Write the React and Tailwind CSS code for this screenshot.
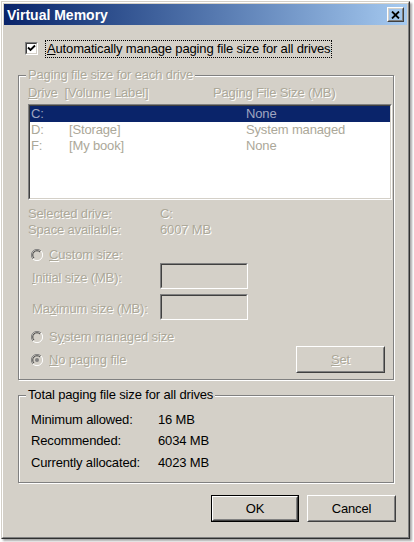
import React from 'react';

const dis = 'text-[#aca899] [text-shadow:1px_1px_0_#fff]';

function Radio({ checked }) {
  return (
    <svg width="12" height="12" viewBox="0 0 12 12" className="shrink-0">
      <circle cx="6" cy="6" r="5.5" fill="#d4d0c8" />
      <path d="M10 2 A5.5 5.5 0 0 0 2 10" fill="none" stroke="#808080" strokeWidth="1" />
      <path d="M9 3 A4.2 4.2 0 0 0 3 9" fill="none" stroke="#404040" strokeWidth="1" />
      <path d="M2 10 A5.5 5.5 0 0 0 10 2" fill="none" stroke="#ffffff" strokeWidth="1" />
      {checked && <circle cx="6" cy="6" r="2" fill="#808080" />}
    </svg>
  );
}

function Etched({ label, labelDisabled, className, children }) {
  return (
    <div className={`relative border border-[#808080] shadow-[1px_1px_0_#fff,inset_1px_1px_0_#fff] ${className}`}>
      <span
        className={`absolute left-[7px] top-[-9px] bg-[#d4d0c8] px-[2px] leading-[16px] ${labelDisabled ? dis : 'text-black'}`}
      >
        {label}
      </span>
      {children}
    </div>
  );
}

function Sunken({ className, children }) {
  return (
    <div className={`border border-t-[#808080] border-l-[#808080] border-r-white border-b-white ${className}`}>
      <div className="h-full w-full border border-t-[#404040] border-l-[#404040] border-r-[#d4d0c8] border-b-[#d4d0c8]">
        {children}
      </div>
    </div>
  );
}

function Button({ children, isDefault, disabled, className }) {
  return (
    <div className={`${isDefault ? 'border border-black' : ''} ${className}`}>
      <div className="h-full border border-t-white border-l-white border-r-[#404040] border-b-[#404040]">
        <div
          className={`flex h-full items-center justify-center border border-t-[#d4d0c8] border-l-[#d4d0c8] border-r-[#808080] border-b-[#808080] ${disabled ? dis : 'text-black'}`}
        >
          {children}
        </div>
      </div>
    </div>
  );
}

export default function App() {
  return (
    <div className="h-[542px] w-[414px] bg-white pl-[1px] pt-[1px] font-['Liberation_Sans',Arial,sans-serif] text-[13px] leading-[16px] tracking-[-0.15px] text-black">
      <div className="h-[538px] w-[409px] border border-t-[#d4d0c8] border-l-[#d4d0c8] border-r-[#303030] border-b-[#303030] shadow-[2px_2px_2px_rgba(0,0,0,0.35)]">
        <div className="h-full border border-t-white border-l-white border-r-[#808080] border-b-[#808080] bg-[#d4d0c8] p-[1px]">
          {/* title bar */}
          <div className="flex h-[21px] items-center justify-between bg-gradient-to-r from-[#0a246a] to-[#a6caf0] pl-[3px] pr-[3px]">
            <span className="text-[14px] font-bold tracking-normal text-white">Virtual Memory</span>
            <Button className="h-[15px] w-[17px]">
              <svg width="9" height="8" viewBox="0 0 9 8">
                <path d="M1 0.5 L8 7.5 M8 0.5 L1 7.5" stroke="#000" strokeWidth="1.8" />
              </svg>
            </Button>
          </div>

          <div className="pl-[14px]">
            {/* auto manage checkbox */}
            <div className="mt-[15px] flex h-[17px] items-center pl-[7px]">
              <Sunken className="h-[13px] w-[13px] bg-white">
                <svg width="9" height="9" viewBox="0 0 9 9" className="block bg-white">
                  <path d="M1 3.5 L3.5 6 L8 1.5" fill="none" stroke="#000" strokeWidth="1.8" />
                </svg>
              </Sunken>
              <span className="ml-[7px] border border-dotted border-black px-[1px]">
                <span className="underline">A</span>utomatically manage paging file size for all drives
              </span>
            </div>

            {/* paging file size for each drive */}
            <Etched label="Paging file size for each drive" labelDisabled className="mt-[18px] h-[305px] w-[376px] pl-[9px] pt-[9px]">
              <div className={`flex ${dis}`}>
                <span className="w-[185px]">
                  <span className="underline">D</span>rive&nbsp; [Volume Label]
                </span>
                <span>Paging File Size (MB)</span>
              </div>
              <Sunken className="mt-[3px] h-[96px] w-[364px] bg-white">
                <div className="flex h-[16px] items-center bg-[#0a246a] text-[#a0a6c0]">
                  <span className="w-[216px] pl-[1px]">C:</span>
                  <span>None</span>
                </div>
                <div className="flex h-[16px] items-center text-[#aca899]">
                  <span className="w-[39px] pl-[1px]">D:</span>
                  <span className="w-[177px]">[Storage]</span>
                  <span>System managed</span>
                </div>
                <div className="flex h-[16px] items-center text-[#aca899]">
                  <span className="w-[39px] pl-[1px]">F:</span>
                  <span className="w-[177px]">[My book]</span>
                  <span>None</span>
                </div>
              </Sunken>

              <div className={`mt-[6px] flex ${dis}`}>
                <span className="w-[132px]">Selected drive:</span>
                <span>C:</span>
              </div>
              <div className={`flex ${dis}`}>
                <span className="w-[132px]">Space available:</span>
                <span>6007 MB</span>
              </div>

              <div className={`mt-[9px] flex items-center pl-[3px] ${dis}`}>
                <Radio />
                <span className="ml-[6px]">
                  <span className="underline">C</span>ustom size:
                </span>
              </div>
              <div className={`flex h-[26px] items-center ${dis}`}>
                <span className="w-[132px] pl-[4px] pt-[3px]">
                  <span className="underline">I</span>nitial size (MB):
                </span>
                <Sunken className="h-[26px] w-[88px]" />
              </div>
              <div className={`mt-[5px] flex h-[26px] items-center ${dis}`}>
                <span className="w-[132px] pl-[4px] pt-[3px]">
                  Ma<span className="underline">x</span>imum size (MB):
                </span>
                <Sunken className="h-[26px] w-[88px]" />
              </div>

              <div className={`mt-[9px] flex items-center pl-[3px] ${dis}`}>
                <Radio />
                <span className="ml-[6px]">
                  S<span className="underline">y</span>stem managed size
                </span>
              </div>
              <div className="mt-[1px] flex h-[27px] items-center justify-between pr-[8px]">
                <div className={`flex items-center pl-[3px] ${dis}`}>
                  <Radio checked />
                  <span className="ml-[6px]">
                    <span className="underline">N</span>o paging file
                  </span>
                </div>
                <Button disabled className="h-[27px] w-[89px]">
                  <span className="underline">S</span>et
                </Button>
              </div>
            </Etched>

            {/* total */}
            <Etched label="Total paging file size for all drives" className="mt-[15px] h-[88px] w-[376px] pl-[12px] pt-[13px]">
              <div className="flex h-[21px] items-center">
                <span className="w-[127px]">Minimum allowed:</span>
                <span>16 MB</span>
              </div>
              <div className="flex h-[22px] items-center">
                <span className="w-[127px]">Recommended:</span>
                <span>6034 MB</span>
              </div>
              <div className="flex h-[21px] items-center">
                <span className="w-[127px]">Currently allocated:</span>
                <span>4023 MB</span>
              </div>
            </Etched>

            {/* buttons */}
            <div className="mt-[12px] flex w-[378px] justify-end gap-[8px]">
              <Button isDefault className="h-[27px] w-[88px]">OK</Button>
              <Button className="h-[27px] w-[89px]">Cancel</Button>
            </div>
          </div>
        </div>
      </div>
    </div>
  );
}
